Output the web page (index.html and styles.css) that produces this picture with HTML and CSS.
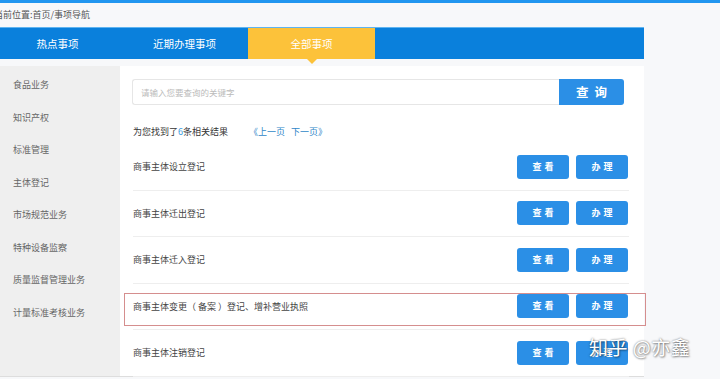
FILE: index.html
```html
<!DOCTYPE html>
<html lang="zh">
<head>
<meta charset="utf-8">
<link rel="stylesheet" href="styles.css">
</head>
<body>
<div class="topbar"></div>
<div class="page">
  <div class="crumb">当前位置:首页/事项导航</div>
  <div class="nav">
    <div class="tab">热点事项</div>
    <div class="tab">近期办理事项</div>
    <div class="tab active">全部事项</div>
  </div>
  <div class="main">
    <ul class="side">
      <li>食品业务</li>
      <li>知识产权</li>
      <li>标准管理</li>
      <li>主体登记</li>
      <li>市场规范业务</li>
      <li>特种设备监察</li>
      <li>质量监督管理业务</li>
      <li>计量标准考核业务</li>
    </ul>
    <div class="content">
      <div class="search">
        <div class="input">请输入您要查询的关键字</div>
        <div class="sbtn">查 询</div>
      </div>
      <div class="result">为您找到了<span class="num">6</span>条相关结果<span class="pager">《上一页&nbsp;&nbsp;&nbsp;下一页》</span></div>
      <div class="row"><span class="name">商事主体设立登记</span><span class="btns"><span class="btn">查看</span><span class="btn">办理</span></span></div>
      <div class="row"><span class="name">商事主体迁出登记</span><span class="btns"><span class="btn">查看</span><span class="btn">办理</span></span></div>
      <div class="row"><span class="name">商事主体迁入登记</span><span class="btns"><span class="btn">查看</span><span class="btn">办理</span></span></div>
      <div class="row hl"><span class="name">商事主体变更（ 备案 ）登记、增补营业执照</span><span class="btns"><span class="btn">查看</span><span class="btn">办理</span></span></div>
      <div class="row"><span class="name">商事主体注销登记</span><span class="btns"><span class="btn">查看</span><span class="btn">办理</span></span></div>
    </div>
  </div>
</div>
<div class="watermark">知乎 @亦鑫</div>
</body>
</html>
```

FILE: styles.css
```css
* { box-sizing: border-box; }
html, body { margin: 0; padding: 0; }
body {
  background: #f7f8fa;
  font-family: "Noto Sans CJK SC", "Microsoft YaHei", sans-serif;
  color: #444;
  width: 720px;
  height: 379px;
  overflow: hidden;
  position: relative;
}
.topbar { height: 3px; background: #2196f0; }
.page { margin-left: -6px; width: 650px; }
.crumb {
  height: 24px;
  line-height: 24px;
  font-size: 9px;
  color: #555;
}
.nav {
  display: flex;
  height: 32px;
  background: #0a80dc;
  border-top: 1px solid #5fb4f0;
}
.tab {
  width: 127px;
  text-align: center;
  line-height: 31px;
  color: #fff;
  font-size: 10.5px;
  position: relative;
}
.tab.active { background: #fcc23a; }
.tab.active::after {
  content: "";
  position: absolute;
  left: 50%;
  bottom: -5px;
  margin-left: -5px;
  border-left: 5px solid transparent;
  border-right: 5px solid transparent;
  border-top: 5px solid #fcc23a;
}
.main {
  display: flex;
  margin-top: 7px;
  height: 311px;
  border-bottom: 1px solid #ddd;
}
.side {
  list-style: none;
  margin: 0;
  padding: 3px 0 0 19px;
  width: 126px;
  background: #efefef;
}
.side li {
  height: 32.5px;
  line-height: 32.5px;
  font-size: 9px;
  color: #666;
}
.content {
  flex: 1;
  background: #fff;
  padding: 13px 15px 0 12px;
}
.search { display: flex; height: 26px; margin-right: 5px; }
.input {
  flex: 1;
  border: 1px solid #e6e6e6;
  border-right: none;
  border-radius: 3px 0 0 3px;
  font-size: 8.5px;
  color: #bbb;
  line-height: 24px;
  padding-left: 8px;
}
.sbtn {
  width: 65px;
  background: #2b8fe6;
  color: #fff;
  border-radius: 0 3px 3px 0;
  text-align: center;
  font-weight: bold;
  font-size: 12.5px;
  line-height: 26px;
  word-spacing: 3px;
}
.result {
  margin: 18px 0 3px 1px;
  line-height: 18px;
  font-size: 9px;
  color: #333;
}
.num { color: #3a9be0; }
.pager { color: #2f86c8; margin-left: 21px; }
.row {
  display: flex;
  align-items: center;
  justify-content: space-between;
  height: 46.5px;
  margin-left: 1px;
  border-bottom: 1px solid #eeeeee;
  position: relative;
}
.name { font-size: 9px; color: #444; }
.btns { display: flex; gap: 7px; margin-right: 1px; }
.btn {
  width: 52px;
  height: 24px;
  line-height: 24px;
  background: #2b8fe6;
  color: #fff;
  border-radius: 3px;
  text-align: center;
  font-size: 9px;
  font-weight: bold;
  letter-spacing: 3px;
  text-indent: 3px;
}
.row.hl::after {
  content: "";
  position: absolute;
  left: -9px;
  right: -17px;
  top: 9px;
  bottom: 3px;
  border: 1px solid #d58e8e;
}
.watermark {
  position: absolute;
  left: 589px;
  top: 333px;
  font-size: 19px;
  color: #fff;
  text-shadow: 0 0 2px rgba(0,0,0,0.55), 1px 1px 2px rgba(0,0,0,0.35);
  letter-spacing: 0.5px;
}
```
